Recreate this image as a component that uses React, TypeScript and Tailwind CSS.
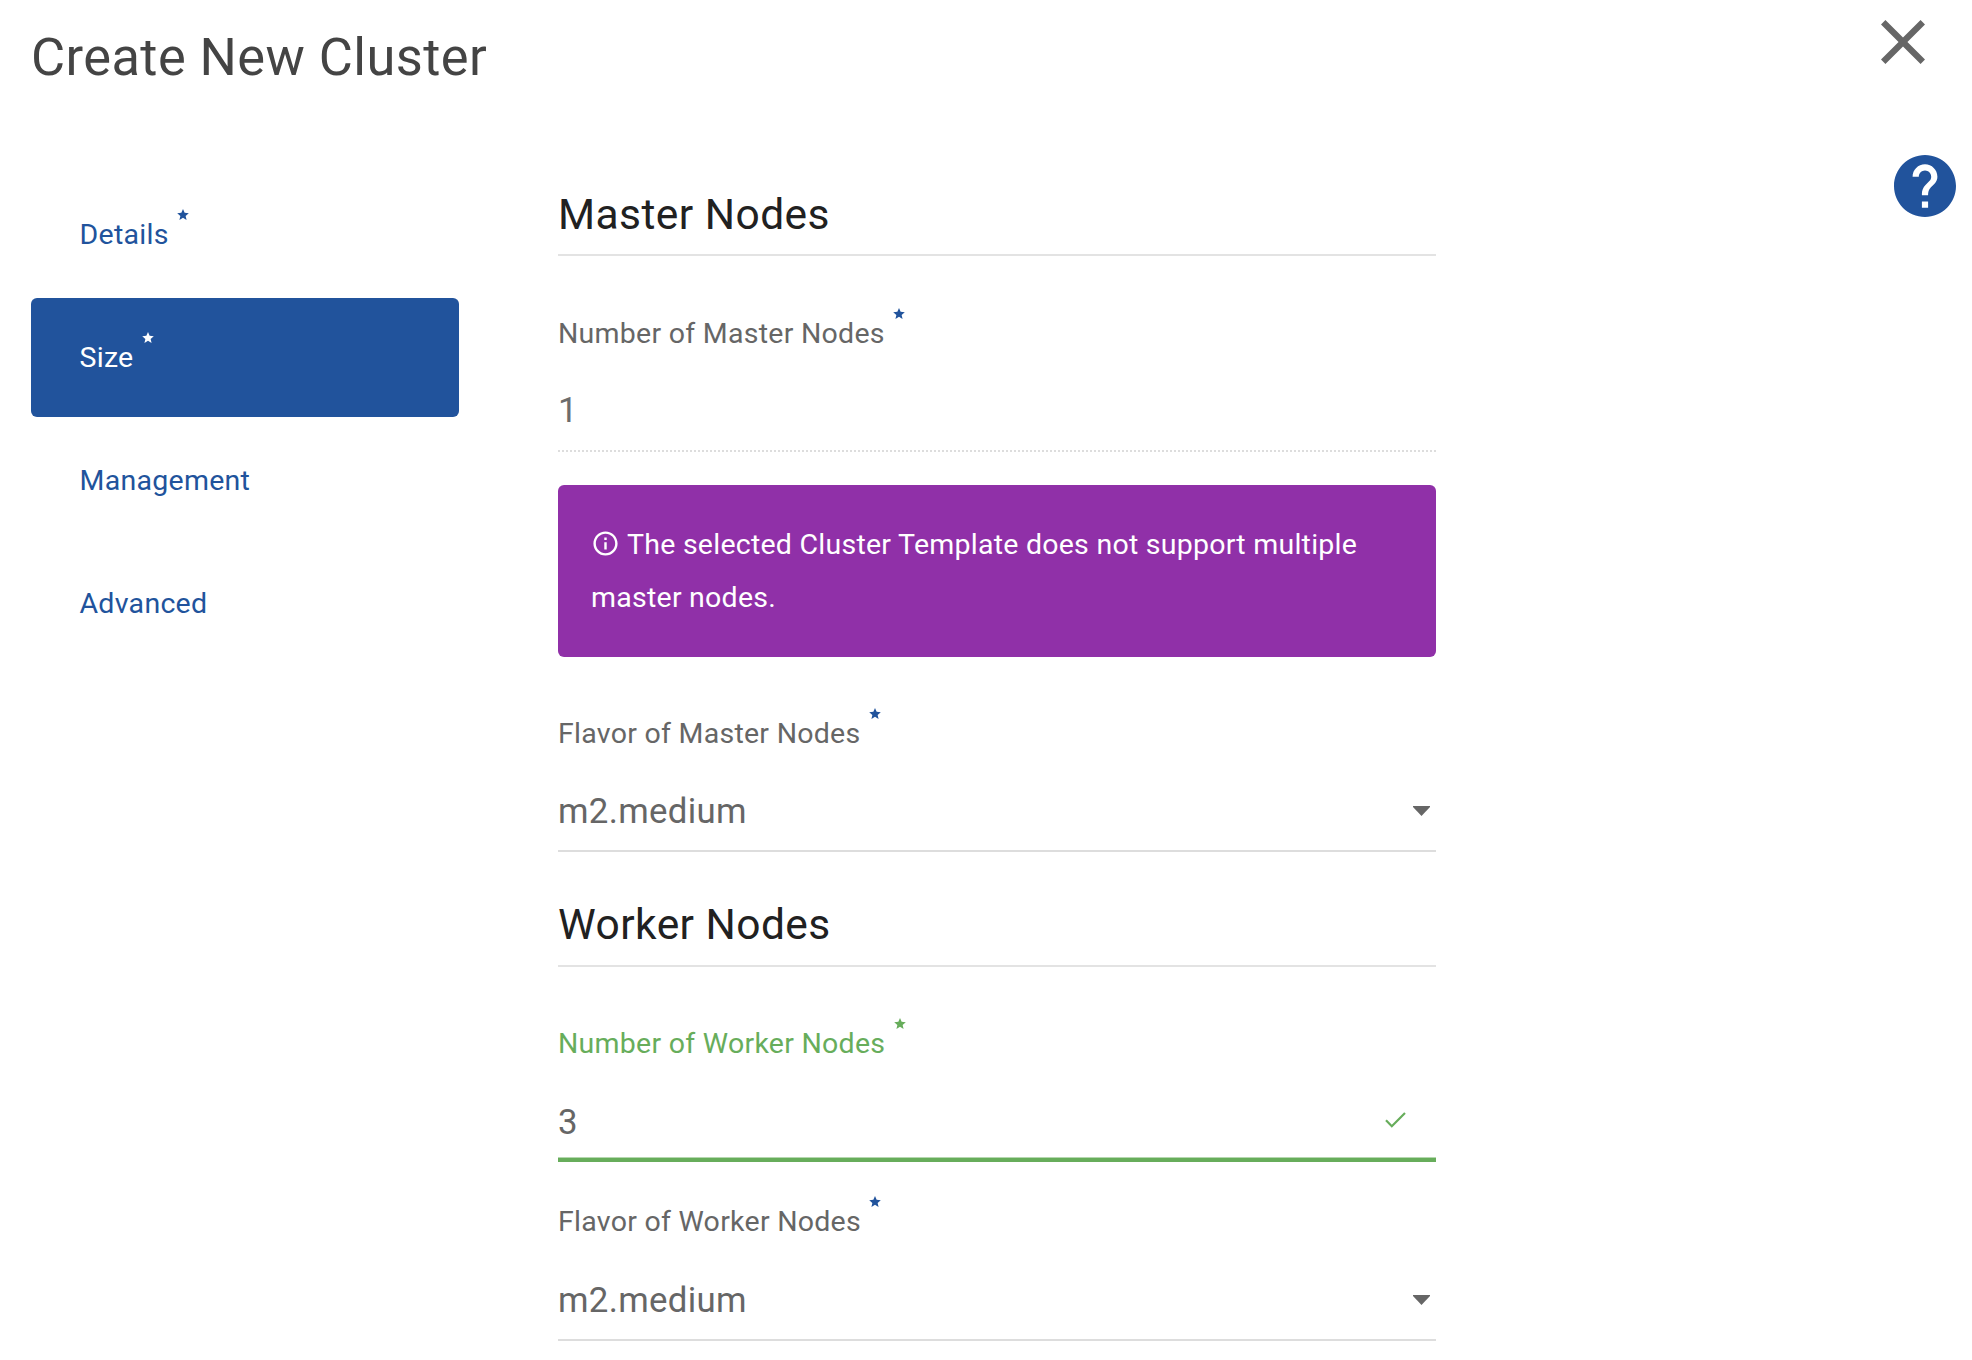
import React from "react";

function Star({ className = "" }: { className?: string }) {
  return (
    <svg viewBox="2 2 20 19" className={"mb-[41px] h-[11px] w-3 shrink-0 " + className} fill="currentColor">
      <path d="M12 17.27 18.18 21l-1.64-7.03L22 9.24l-7.19-.61L12 2 9.19 8.63 2 9.24l5.46 4.73L5.82 21z" />
    </svg>
  );
}

function NavItem({ label, star, active }: { label: string; star?: boolean; active?: boolean }) {
  return (
    <a
      className={
        "flex h-[119px] w-[428px] items-center rounded-[6px] pl-[48.5px] text-[28.5px] leading-[43px] tracking-[0.28px] " +
        (active ? "bg-[#21539c] text-white" : "text-[#21539c]")
      }
    >
      <span>{label}</span>
      {star && <Star className="ml-2" />}
    </a>
  );
}

function Heading({ text, className }: { text: string; className: string }) {
  return (
    <h2
      className={
        "flex items-center border-b-2 border-[#e3e3e3] text-[42.5px] leading-[49px] tracking-[0.45px] text-[#212121] " +
        className
      }
    >
      {text}
    </h2>
  );
}

function Label({ text, className, valid }: { text: string; className: string; valid?: boolean }) {
  return (
    <label
      className={
        "flex h-[41px] items-center text-[28.5px] leading-[43px] tracking-[0.27px] " +
        (valid ? "text-[#67ad5b] " : "text-[#666] ") +
        className
      }
    >
      <span>{text}</span>
      <Star className={"ml-[8.5px] " + (valid ? "text-[#67ad5b]" : "text-[#21539c]")} />
    </label>
  );
}

function Select({ value, className }: { value: string; className: string }) {
  return (
    <div
      className={
        "flex h-[80px] items-center justify-between border-b-2 border-[#ddd] pr-[6px] text-[34.8px] leading-[52px] tracking-[0.3px] text-[#666] " +
        className
      }
    >
      <span className="pb-px">{value}</span>
      <svg className="h-[10px] w-[17px]" viewBox="0 0 17 10" fill="currentColor">
        <path d="M0 0h17v1L8.500 10 0 1z" />
      </svg>
    </div>
  );
}

export default function App() {
  return (
    <div className="h-[1360px] w-[1972px] overflow-hidden bg-white font-['Roboto',sans-serif]">
      <header className="flex h-[155px] items-start justify-between pl-[31px] pr-[47px]">
        <h1 className="pt-[18px] text-[52.4px] leading-[78px] tracking-[0.42px] text-[#444]">Create New Cluster</h1>
        <svg className="mt-5 size-[44px]" viewBox="5 5 14 14" fill="#666">
          <path d="M19 6.410 17.590 5 12 10.590 6.410 5 5 6.410 10.590 12 5 17.590 6.410 19 12 13.410 17.590 19 19 17.590 13.410 12z" />
        </svg>
      </header>
      <main className="flex pl-[31px] pr-4">
        <nav className="flex flex-col gap-1 pt-5">
          <NavItem label="Details" star />
          <NavItem label="Size" star active />
          <NavItem label="Management" />
          <NavItem label="Advanced" />
        </nav>
        <section className="ml-[99px] w-[878px] pt-5">
          <Heading text="Master Nodes" className="h-[81px]" />
          <Label text="Number of Master Nodes" className="mt-[57px]" />
          <div className="mt-4 flex h-[82px] items-center border-b-2 border-dotted border-[#ddd] text-[34.8px] leading-[52px] text-[#6c6c6c]">
            <span className="pb-px">1</span>
          </div>
          <div className="mt-[33px] h-[172px] rounded-[6px] bg-[#9030a8] pl-[33px] pr-16 pt-[33px] text-[28.5px] leading-[53px] tracking-[0.25px] text-white">
            <svg className="mr-[7px] inline size-[29px] align-[-4px]" viewBox="0 0 24 24" fill="currentColor">
              <path d="M11 7h2v2h-2zm0 4h2v6h-2zm1-9C6.480 2 2 6.480 2 12s4.480 10 10 10 10-4.480 10-10S17.520 2 12 2zm0 18c-4.410 0-8-3.590-8-8s3.590-8 8-8 8 3.590 8 8-3.590 8-8 8z" />
            </svg>
            The selected Cluster Template does not support multiple master nodes.
          </div>
          <Label text="Flavor of Master Nodes" className="mt-[56px]" />
          <Select value="m2.medium" className="mt-[18px]" />
          <Heading text="Worker Nodes" className="mt-[32px] h-[83px]" />
          <Label text="Number of Worker Nodes" valid className="mt-[56px]" />
          <div className="mt-6 border-b-4 border-[#67ad5b]">
            <div className="flex h-[70px] items-center justify-between border-b border-[#b5d8af] pr-[30px] text-[34.8px] leading-[52px] text-[#666]">
              <span className="pb-[2px]">3</span>
              <svg className="mb-[6px] h-[16px] w-[21px]" viewBox="0 0 21 16" fill="none" stroke="#67ad5b" strokeWidth="2.2">
                <path d="M1 8.300 6.800 14.200 20 1" />
              </svg>
            </div>
          </div>
          <Label text="Flavor of Worker Nodes" className="mt-[39px]" />
          <Select value="m2.medium" className="mt-[19px]" />
        </section>
        <svg className="ml-auto size-[62px]" viewBox="2 2 20 20" fill="#21539c">
          <path d="M12 2C6.480 2 2 6.480 2 12s4.480 10 10 10 10-4.480 10-10S17.520 2 12 2zm1 17h-2v-2h2v2zm2.070-7.750l-.9.920C13.450 12.900 13 13.500 13 15h-2v-.5c0-1.100.450-2.100 1.170-2.830l1.240-1.260c.370-.360.590-.860.590-1.410 0-1.100-.9-2-2-2s-2 .9-2 2H8c0-2.210 1.790-4 4-4s4 1.790 4 4c0 .880-.360 1.680-.930 2.250z" />
        </svg>
      </main>
    </div>
  );
}
